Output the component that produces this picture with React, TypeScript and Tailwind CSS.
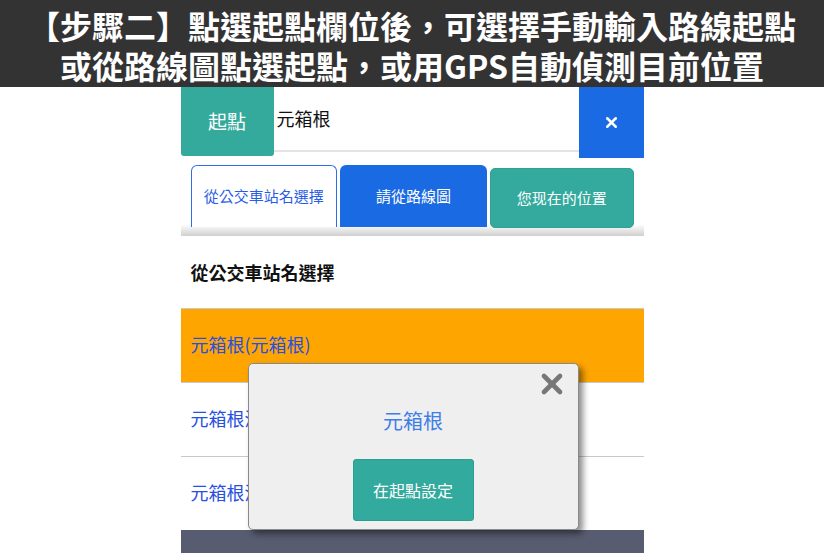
import { X } from 'lucide-react'

const font = { fontFamily: '"Noto Sans CJK TC", "Noto Sans", sans-serif' }

const stops = ['元箱根(元箱根)', '元箱根溫泉', '元箱根港']

export default function App() {
  return (
    <div className="w-[824px] h-[553px] bg-white overflow-hidden flex flex-col" style={font}>
      <div className="h-[87px] shrink-0 bg-[#333333] text-white font-bold text-[32px] leading-[40px] flex flex-col items-center justify-center pt-[2px]">
        <div>【步驟二】點選起點欄位後，可選擇手動輸入路線起點</div>
        <div>或從路線圖點選起點，或用GPS自動偵測目前位置</div>
      </div>

      <div className="relative mx-auto w-[463px] flex-1 flex flex-col">
        {/* search bar */}
        <div className="h-[71px] flex">
          <div className="w-[93px] h-[69px] bg-[#33aa9c] rounded-b-[3px] text-white text-[19px] flex items-center justify-center">
            起點
          </div>
          <div className="flex-1 h-[65px] border-b-2 border-[#e4e4e4] flex items-center pl-[3px] text-[18px] text-[#111]">
            元箱根
          </div>
          <div className="w-[65px] h-[71px] bg-[#1a6ae3] text-white flex items-center justify-center">
            <X size={17} strokeWidth={3.5} />
          </div>
        </div>

        {/* tabs */}
        <div className="h-[78px] bg-gradient-to-b from-white via-white via-85% to-[#d0d0d0] px-[10px] pt-[7px] flex gap-[3px] items-start">
          <div className="w-[147px] h-[62px] border border-b-0 border-[#2f6ee8] rounded-t-[6px] bg-white text-[#2a5de6] text-[15px] flex items-center justify-center">
            從公交車站名選擇
          </div>
          <div className="w-[147px] h-[62px] bg-[#1a6ae3] rounded-t-[6px] text-white text-[15px] flex items-center justify-center">
            請從路線圖
          </div>
          <div className="w-[144px] h-[60px] mt-[3px] bg-[#34aa9e] border border-[#2ea395] rounded-[5px] text-white text-[15px] flex items-center justify-center">
            您现在的位置
          </div>
        </div>

        <div className="h-[72px] flex items-center pl-[10px] font-bold text-[18px] text-[#111]">從公交車站名選擇</div>

        {stops.map((s, i) => (
          <div
            key={s}
            className={`h-[74px] border-t border-[#c9c9c9] flex items-center pl-[10px] pb-[2px] text-[18px] text-[#2850e0] ${i === 0 ? 'bg-[#ffa500]' : 'bg-white'}`}
          >
            {s}
          </div>
        ))}

        <div className="flex-1 bg-[#585c70]" />

        {/* popup */}
        <div className="absolute left-[67px] top-[276px] w-[331px] h-[167px] bg-[#efefef] border border-[#8a8a8a] rounded-[5px] shadow-[4px_4px_6px_rgba(0,0,0,0.45)] flex flex-col items-center">
          <div className="absolute right-[10px] top-[4px] text-[#777]">
            <X size={32} strokeWidth={3.5} />
          </div>
          <div className="mt-[42px] text-[20px] text-[#3d7ee8]">元箱根</div>
          <div className="mt-[23px] w-[121px] h-[62px] bg-[#33aa9e] border border-[#2a9e90] rounded-[3px] text-white text-[16px] flex items-center justify-center">
            在起點設定
          </div>
        </div>
      </div>
    </div>
  )
}
